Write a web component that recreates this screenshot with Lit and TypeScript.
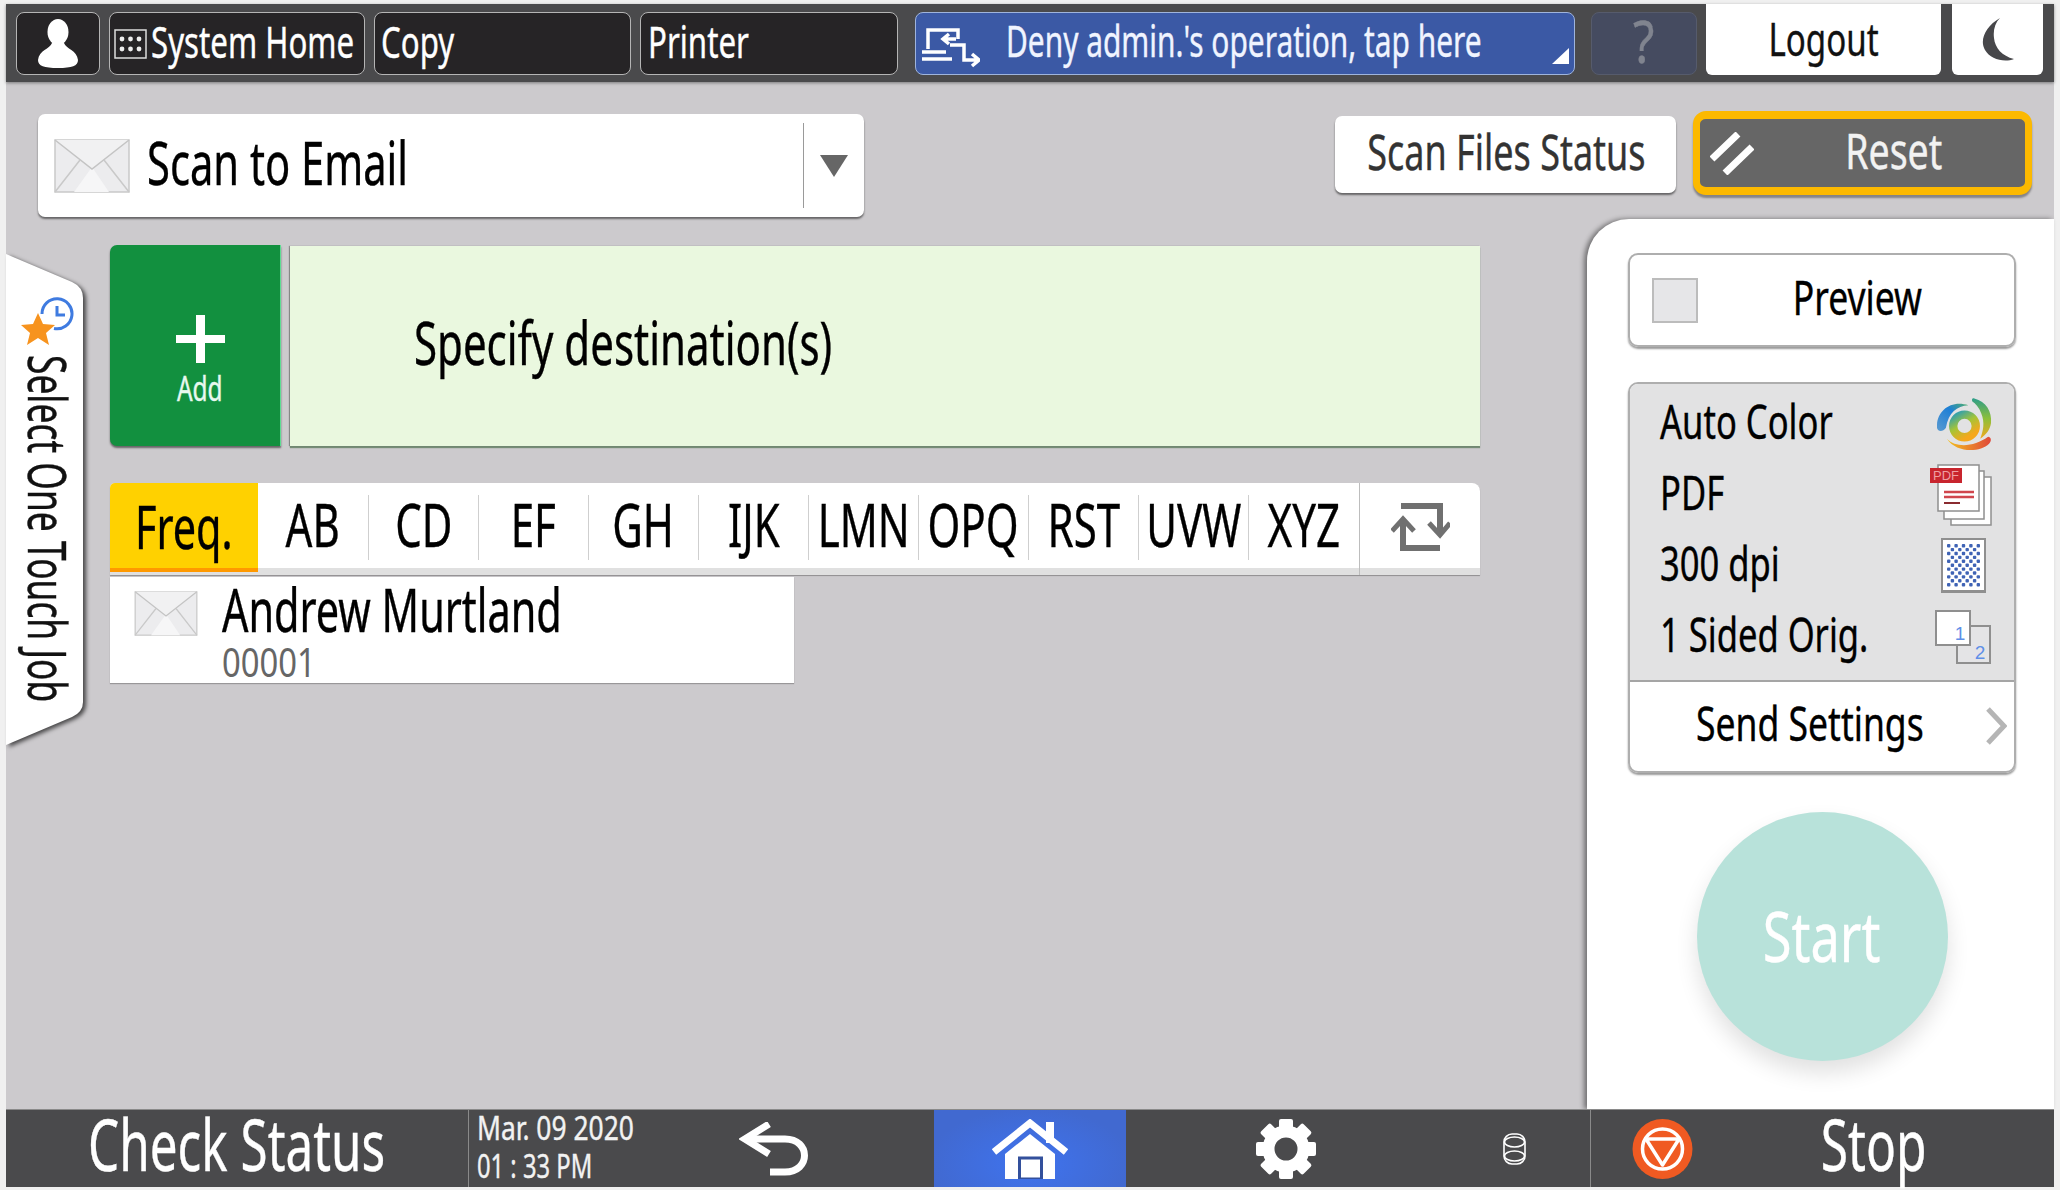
import { LitElement, html, css, svg } from "lit";
import { customElement } from "lit/decorators.js";

const envelope = (w: number, h: number) => html`<svg class="env" width=${w} height=${h} viewBox="0 0 76 54">
  <rect x="1" y="1" width="74" height="52" fill="#ececee" stroke="#c9c9c9" stroke-width="1.5"/>
  <path d="M20 53 L38 28 L55 53Z" fill="#f6f6f7"/>
  <path d="M1 1 L38 30 L75 1" fill="#f1f1f2" stroke="#c4c4c4" stroke-width="1.5"/>
  <path d="M1 53 L26 21 M75 53 L50 21" fill="none" stroke="#c9c9c9" stroke-width="1.5"/>
</svg>`;

const dots = () => {
  const out = [];
  for (let r = 0; r < 11; r++) for (let c = 0; c < 9; c++) {
    if ((r + c) % 2 === 0) out.push(svg`<rect x=${6 + c * 3.7} y=${6 + r * 3.9} width="3.4" height="3.4" rx="1" fill="#3f63b5"/>`);
  }
  return out;
};

const gearTeeth = () => [0, 45, 90, 135, 180, 225, 270, 315].map(
  (a) => svg`<rect x="23" y="0" width="14" height="14" rx="2" fill="#fff" transform="rotate(${a} 30 30)"/>`
);

@customElement("app-root")
export class AppRoot extends LitElement {
  static styles = css`
    :host { display: block; width: 2060px; height: 1190px; background: #f0f0f0; box-sizing: border-box; padding: 4px 6px 3px; font-family: "Noto Sans", "Liberation Sans", sans-serif; }
    * { box-sizing: border-box; }
    svg { display: block; flex: none; }
    .t { display: inline-block; white-space: nowrap; line-height: 1; transform: translateY(-.06em) scaleX(var(--sx, .72)); flex: none; -webkit-text-stroke: .4px currentColor; }
    .l { transform-origin: left center; }
    .screen { width: 2048px; height: 1183px; background: #cccacd; display: flex; flex-direction: column; }

    .top { height: 78px; flex: none; background: #4a4a4c; display: flex; align-items: flex-start; gap: 9px; padding: 8px 0 0 10px; box-shadow: 0 1px 3px rgba(0,0,0,.4); position: relative; }
    .tb { height: 63px; background: #262426; border: 1.5px solid #b5b5b5; border-radius: 8px; color: #fff; font-size: 44px; display: flex; align-items: center; --sx: .71; }
    .tb.user { width: 84px; justify-content: center; }
    .tb.sys { width: 256px; padding-left: 4px; gap: 4px; }
    .tb.copy { width: 257px; padding-left: 6px; }
    .tb.printer { width: 258px; padding-left: 7px; }
    .tb.deny { width: 660px; margin-left: 8px; background: #3b59a5; border-color: #9fb4dc; padding-left: 6px; position: relative; font-size: 43px; --sx: .695; }
    .tb.deny svg:first-child { margin-top: 8px; }
    .tb.deny .t { margin-left: 26px; color: #f0f4ff; }
    .tri { position: absolute; right: 5px; bottom: 10px; }
    .tb.help { width: 106px; margin-left: 7px; background: #454b60; border-color: #565b6c; color: #80848f; justify-content: center; font-size: 58px; --sx: .85; }
    .tb.white { background: #fff; border: none; border-radius: 0 0 6px 6px; margin-top: -8px; height: 71px; color: #111; justify-content: center; }
    .tb.logout { width: 235px; font-size: 46px; --sx: .72; padding-top: 3px; }
    .tb.moon { width: 91px; margin-left: 2px; }

    .head { height: 137px; flex: none; display: flex; align-items: flex-start; padding: 29px 22px 0 32px; }
    .select { width: 826px; height: 103px; margin-top: 3px; background: #fff; border-radius: 7px; box-shadow: 0 2px 2px rgba(0,0,0,.5); display: flex; align-items: center; padding: 0 16px; font-size: 60px; color: #000; --sx: .695; }
    .select .name { margin-left: 17px; flex: 1; }
    .vline { width: 1px; height: 85px; background: #9a9a9a; }
    .arrow { margin-left: 16px; }
    .files { width: 341px; height: 77px; margin-top: 5px; margin-left: auto; background: #fff; border-radius: 7px; box-shadow: 0 2px 2px rgba(0,0,0,.5); display: flex; align-items: center; justify-content: center; font-size: 50px; color: #333; padding: 0 0 2px 2px; }
    .reset { width: 339px; height: 84px; margin-left: 17px; background: #666; border: 7px solid #fcb900; border-width: 8px 7px; border-radius: 13px; box-shadow: 0 3px 2px rgba(0,0,0,.35); display: flex; align-items: center; padding-left: 10px; color: #f2f2f2; font-size: 50px; --sx: .75; }
    .reset .c { flex: 1; display: flex; justify-content: center; padding-left: 8px; }

    .body { height: 890px; flex: none; display: flex; }
    .tab { width: 77px; height: 491px; margin-top: 35px; flex: none; position: relative; display: flex; flex-direction: column; align-items: center; padding: 43px 0 0 6px; }
    .tabshape { position: absolute; left: 0; top: 0; filter: drop-shadow(3px 2px 2px rgba(0,0,0,.65)); }
    .tabicon { position: relative; }
    .vert { position: relative; writing-mode: vertical-rl; white-space: nowrap; line-height: 1; font-size: 52px; color: #111; transform: scaleY(.68); transform-origin: top center; margin-top: 8px; -webkit-text-stroke: .4px currentColor; }

    .content { width: 1371px; margin-left: 27px; padding-top: 26px; flex: none; }
    .dest { width: 1370px; height: 201px; display: flex; gap: 9px; }
    .add { width: 171px; background: #12903f; border-radius: 7px 0 0 7px; border-right: 1px solid #5fdc93; box-shadow: 0 2px 2px rgba(0,0,0,.5); display: flex; flex-direction: column; align-items: center; padding: 70px 0 0 10px; color: #e8f8ee; font-size: 34px; }
    .add .t { margin-top: 10px; }
    .field { flex: 1; background: #eaf8df; margin-top: 1px; box-shadow: 0 2px 1px rgba(60,100,60,.6), -1px 0 1px rgba(0,0,0,.3); display: flex; align-items: center; padding-left: 124px; font-size: 60px; color: #000; --sx: .70; }
    .tabs { width: 1370px; height: 92px; margin-top: 37px; background: #fff; border-radius: 5px 8px 0 0; box-shadow: inset 0 -7px 0 #e0e0e0, 0 1px 1px rgba(0,0,0,.3); display: flex; align-items: flex-start; font-size: 60px; color: #000; --sx: .70; }
    .tabs .cell { height: 85px; display: flex; align-items: center; justify-content: center; flex: none; width: 109px; padding-top: 4px; }
    .tabs .freq { width: 148px; height: 89px; background: #ffd100; border-bottom: 4px solid #ff9900; border-radius: 5px 0 0 0; padding-top: 8px; --sx: .69; }
    .tabs .ab { width: 110px; }
    .tabs .cell.plain { width: 110px; }
    .sep { width: 1px; height: 65px; margin-top: 12px; background: #cfcfcf; flex: none; }
    .tabs .swap { flex: 1; height: 92px; border-left: 1px solid #bdbdbd; display: flex; justify-content: center; padding-top: 20px; }
    .row { width: 684px; height: 106px; margin-top: 2px; background: #fff; box-shadow: 0 1px 1px rgba(0,0,0,.25); display: flex; padding-left: 24px; }
    .row .env { margin-top: 14px; }
    .row .col { margin-left: 24px; padding-top: 6px; display: flex; flex-direction: column; align-items: flex-start; }
    .row .nm { font-size: 60px; color: #000; --sx: .69; }
    .row .id { font-size: 40px; color: #666; margin-top: 1px; --sx: .82; -webkit-text-stroke: 0; }

    .panel { width: 467px; margin-left: auto; flex: none; background: #fff; border-radius: 42px 0 0 0; box-shadow: -3px 0 5px rgba(0,0,0,.45); display: flex; flex-direction: column; align-items: center; padding: 34px 38px 0 41px; }
    .preview { width: 388px; height: 94px; flex: none; border: 2px solid #aeaeae; border-radius: 10px; box-shadow: 0 2px 2px rgba(0,0,0,.4); display: flex; align-items: center; padding-left: 22px; font-size: 48px; color: #000; --sx: .74; }
    .box { width: 46px; height: 45px; background: #e6e6e8; border: 2px solid #bcbcbc; flex: none; }
    .preview .c { flex: 1; display: flex; justify-content: center; padding-left: 2px; }
    .card { width: 388px; height: 391px; flex: none; margin-top: 35px; border: 2px solid #aeaeae; border-radius: 10px; box-shadow: 0 2px 2px rgba(0,0,0,.4); font-size: 48px; color: #000; }
    .grey { height: 296px; background: #e2e2e3; border-radius: 8px 8px 0 0; padding: 4px 18px 0 30px; }
    .sr { height: 71px; display: flex; align-items: center; }
    .sr .t { flex: 1 1 0; min-width: 0; }
    .ic { width: 66px; display: flex; justify-content: center; flex: none; }
    .ic.shift { padding-right: 4px; }
    .ic.swirl { padding-left: 3px; }
    .send { height: 91px; border-top: 2px solid #a5a5a5; display: flex; align-items: center; padding: 0 7px 2px 5px; --sx: .74; }
    .send .c { flex: 1; display: flex; justify-content: center; }
    .start { width: 251px; height: 249px; flex: none; margin-top: 39px; border-radius: 50%; background: #b8e2da; box-shadow: 0 12px 22px rgba(0,0,0,.12); display: flex; align-items: center; justify-content: center; font-size: 70px; color: #fff; --sx: .75; padding-top: 4px; }

    .bottom { height: 78px; flex: none; background: #4a4a4c; display: flex; align-items: center; color: #fff; border-top: 1px solid #8a8a8a; }
    .check { width: 463px; height: 100%; border-right: 1px solid #8a8a8a; display: flex; align-items: center; justify-content: center; font-size: 72px; flex: none; --sx: .686; padding-bottom: 3px; }
    .date { width: 270px; padding-left: 8px; font-size: 33px; display: flex; flex-direction: column; align-items: flex-start; gap: 5px; flex: none; color: #f2f2f2; }
    .date .wide { --sx: .8; }
    .home { width: 192px; height: 100%; margin-left: 125px; flex: none; background: radial-gradient(ellipse at 50% 70%, #3f73ee 0%, #4169d0 75%); display: flex; align-items: center; justify-content: center; }
    .gear { margin-left: 130px; }
    .db { margin-left: 187px; }
    .divr { width: 1px; height: 100%; background: #8a8a8a; margin-left: 64px; flex: none; }
    .stop { margin-left: 41px; }
    .stoptxt { flex: 1; display: flex; justify-content: center; font-size: 72px; --sx: .69; padding-bottom: 3px; }
  `;

  render() {
    const letters = ["CD", "EF", "GH", "IJK", "LMN", "OPQ", "RST", "UVW"];
    return html`<div class="screen">
      <div class="top">
        <div class="tb user">
          <svg width="40" height="50" viewBox="0 0 40 50"><ellipse cx="20" cy="13" rx="10.5" ry="13" fill="#fff"/><path d="M14 24 C12 30 1 31 0 41 C0 47 6 49 20 49 C34 49 40 47 40 41 C39 31 28 30 26 24Z" fill="#fff"/></svg>
        </div>
        <div class="tb sys">
          <svg width="33" height="30" viewBox="0 0 33 30"><rect x="1" y="1" width="31" height="28" fill="none" stroke="#ddd" stroke-width="1.5"/>
            ${[8, 16.5, 25].map((x) => [10, 20].map((y) => svg`<circle cx=${x} cy=${y} r="2.4" fill="#eee"/>`))}</svg>
          <span class="t l">System Home</span>
        </div>
        <div class="tb copy"><span class="t l">Copy</span></div>
        <div class="tb printer"><span class="t l">Printer</span></div>
        <div class="tb deny">
          <svg width="58" height="42" viewBox="0 0 58 42" fill="none" stroke="#fff" stroke-width="3.5"><path d="M6 22 V3 H36 V12"/><path d="M0 25 H24 M0 32 H30"/><path d="M34 12 H22 M27 7 L21 12 L27 17"/><path d="M28 18 H42 V33 H56 M50 27 L57 33 L50 39"/></svg>
          <span class="t l">Deny admin.'s operation, tap here</span>
          <svg class="tri" width="17" height="16" viewBox="0 0 17 16"><path d="M17 0 V16 H0Z" fill="#fff"/></svg>
        </div>
        <div class="tb help"><span class="t">?</span></div>
        <div class="tb white logout"><span class="t">Logout</span></div>
        <div class="tb white moon">
          <svg width="32" height="43" viewBox="0 0 32 43"><path d="M18 0 C4 8 -3 22 3 32 C8 41 22 45 32 41 C20 38 13 30 12 20 C11 12 13 5 18 0Z" fill="#47474a"/></svg>
        </div>
      </div>

      <div class="head">
        <div class="select">
          ${envelope(76, 54)}
          <span class="t l name">Scan to Email</span>
          <div class="vline"></div>
          <svg class="arrow" width="28" height="22" viewBox="0 0 28 22"><path d="M0 0 H28 L14 22Z" fill="#666"/></svg>
        </div>
        <div class="files"><span class="t">Scan Files Status</span></div>
        <div class="reset">
          <svg width="44" height="43" viewBox="0 0 44 43" fill="none" stroke="#fff" stroke-width="7"><path d="M2 27 L28 2 M15 41 L42 15"/></svg>
          <div class="c"><span class="t">Reset</span></div>
        </div>
      </div>

      <div class="body">
        <div class="tab">
          <svg class="tabshape" width="80" height="495" viewBox="0 0 80 495"><path d="M0 0 L66 28 Q77 33 77 44 V448 Q77 458 66 463 L0 491Z" fill="#fff"/></svg>
          <svg class="tabicon" width="54" height="50" viewBox="0 0 54 50">
            <path d="M21 17 A15 15 0 1 1 33 31.5" fill="none" stroke="#3f7be0" stroke-width="3"/>
            <path d="M36 9 V18 H44" fill="none" stroke="#3f7be0" stroke-width="3"/>
            <path d="M17 16 L22 27 L34 28 L25 36 L28 48 L17 41 L6 48 L9 36 L0 28 L12 27Z" fill="#f7931e"/>
          </svg>
          <span class="vert">Select One Touch Job</span>
        </div>

        <div class="content">
          <div class="dest">
            <div class="add">
              <svg width="49" height="48" viewBox="0 0 49 48"><path d="M20 0 H29 V20 H49 V28 H29 V48 H20 V28 H0 V20 H20Z" fill="#fff"/></svg>
              <span class="t">Add</span>
            </div>
            <div class="field"><span class="t l">Specify destination(s)</span></div>
          </div>
          <div class="tabs">
            <div class="cell freq"><span class="t">Freq.</span></div>
            <div class="cell ab"><span class="t">AB</span></div>
            <div class="sep"></div>
            ${letters.map((x) => html`<div class="cell"><span class="t">${x}</span></div><div class="sep"></div>`)}
            <div class="cell plain"><span class="t">XYZ</span></div>
            <div class="swap">
              <svg width="59" height="48" viewBox="0 0 59 48" fill="none" stroke="#707070" stroke-width="6"><path d="M10 3 H49 V30"/><path d="M38 20 L49 32 L59 20" stroke-width="5"/><path d="M12 16 V45 H49"/><path d="M1 28 L12 16 L23 28" stroke-width="5"/></svg>
            </div>
          </div>
          <div class="row">
            ${envelope(64, 45)}
            <div class="col">
              <span class="t l nm">Andrew Murtland</span>
              <span class="t l id">00001</span>
            </div>
          </div>
        </div>

        <div class="panel">
          <div class="preview">
            <div class="box"></div>
            <div class="c"><span class="t">Preview</span></div>
          </div>
          <div class="card">
            <div class="grey">
              <div class="sr"><span class="t l">Auto Color</span>
                <div class="ic swirl"><svg width="55" height="54" viewBox="0 0 56 54">
                  <defs>
                    <linearGradient id="rg" x1="0" y1="0" x2=".6" y2="1"><stop offset="0" stop-color="#2f9fb0"/><stop offset=".5" stop-color="#a5c437"/><stop offset="1" stop-color="#f5a81c"/></linearGradient>
                    <linearGradient id="bg" x1="0" y1="1" x2="1" y2="0"><stop offset="0" stop-color="#5a9ad0"/><stop offset=".6" stop-color="#1e7fd6"/><stop offset="1" stop-color="#52b06a"/></linearGradient>
                    <linearGradient id="gg" x1="0" y1="0" x2="0" y2="1"><stop offset="0" stop-color="#2d9d8a"/><stop offset=".5" stop-color="#8cbf3a"/><stop offset="1" stop-color="#f1a91f"/></linearGradient>
                    <linearGradient id="og" x1="0" y1="0" x2="1" y2="0"><stop offset="0" stop-color="#f4c21e"/><stop offset="1" stop-color="#e0483a"/></linearGradient>
                  </defs>
                  <circle cx="28" cy="29" r="11.5" fill="none" stroke="url(#rg)" stroke-width="8.5"/>
                  <path d="M0 31 C-1 14 14 2 32 8 C20 9 12 15 9 31 C6 35 1 35 0 31Z" fill="url(#bg)"/>
                  <path d="M38 1 C50 4 56 14 55 26 C54 33 50 38 44 42 C47 34 49 26 45 16 C43 10 39 6 36 4 C35 2 36 0 38 1Z" fill="url(#gg)"/>
                  <path d="M10 42 C20 52 38 50 52 40 C55 40 56 44 53 47 C44 56 20 57 10 42Z" fill="url(#og)"/>
                </svg></div>
              </div>
              <div class="sr"><span class="t l">PDF</span>
                <div class="ic shift"><svg width="62" height="62" viewBox="0 0 62 62">
                  <rect x="21" y="13" width="40" height="48" fill="#fff" stroke="#8f8f8f" stroke-width="1.5"/>
                  <rect x="14" y="7" width="40" height="48" fill="#fff" stroke="#8f8f8f" stroke-width="1.5"/>
                  <rect x="8" y="1" width="41" height="46" fill="#fff" stroke="#8f8f8f" stroke-width="1.5"/>
                  <rect x="0" y="4" width="32" height="15" fill="#c8252e"/>
                  <text x="16" y="16" text-anchor="middle" font-family="Liberation Sans, sans-serif" font-size="13" fill="#ee9ea2">PDF</text>
                  <path d="M14 28 H44 M14 33 H44" stroke="#d0464d" stroke-width="2.5"/><path d="M14 39 H30" stroke="#8a2b30" stroke-width="2"/>
                </svg></div>
              </div>
              <div class="sr"><span class="t l">300 dpi</span>
                <div class="ic"><svg width="45" height="56" viewBox="0 0 45 56">
                  <rect x="1" y="1" width="43" height="53" fill="#fff" stroke="#8f8f8f" stroke-width="2"/>
                  <rect x="1" y="52" width="43" height="3" fill="#8f8f8f"/>
                  ${dots()}
                </svg></div>
              </div>
              <div class="sr"><span class="t l">1 Sided Orig.</span>
                <div class="ic"><svg width="56" height="54" viewBox="0 0 56 54">
                  <rect x="22" y="16" width="33" height="37" fill="#e4e4e6" stroke="#8f8f8f" stroke-width="2"/>
                  <rect x="1" y="1" width="34" height="34" fill="#fff" stroke="#8f8f8f" stroke-width="2"/>
                  <text x="25" y="30" font-family="Liberation Sans, sans-serif" font-size="19" fill="#5f8fe8" text-anchor="middle">1</text>
                  <text x="45" y="49" font-family="Liberation Sans, sans-serif" font-size="19" fill="#5f8fe8" text-anchor="middle">2</text>
                </svg></div>
              </div>
            </div>
            <div class="send">
              <div class="c"><span class="t">Send Settings</span></div>
              <svg width="22" height="38" viewBox="0 0 22 38" fill="none" stroke="#b5b5b5" stroke-width="5"><path d="M3 2 L19 19 L3 36"/></svg>
            </div>
          </div>
          <div class="start"><span class="t">Start</span></div>
        </div>
      </div>

      <div class="bottom">
        <div class="check"><span class="t">Check Status</span></div>
        <div class="date"><span class="t l wide">Mar. 09 2020</span><span class="t l">01 : 33 PM</span></div>
        <svg width="70" height="54" viewBox="0 0 70 54" fill="none" stroke="#fff" stroke-width="7"><path d="M6 17 H46 C72 17 72 50 46 50 H31"/><path d="M30 2 L6 17 L30 32"/></svg>
        <div class="home">
          <svg width="76" height="60" viewBox="0 0 76 60">
            <path d="M54 3 H62 V24 H54Z" fill="#fff"/>
            <path d="M2 33 L38 4 L74 33" fill="none" stroke="#fff" stroke-width="7"/>
            <path d="M13 35 L38 15 L63 35 V60 H13Z" fill="#fff"/>
            <rect x="27.5" y="39" width="22" height="21" fill="#fff" stroke="#33509c" stroke-width="3"/>
          </svg>
        </div>
        <svg class="gear" width="60" height="60" viewBox="0 0 60 60">${gearTeeth()}<circle cx="30" cy="30" r="17.5" fill="none" stroke="#fff" stroke-width="12"/></svg>
        <svg class="db" width="23" height="32" viewBox="0 0 23 32" fill="none" stroke="#fff" stroke-width="1.6"><rect x="1" y="1" width="21" height="30" rx="8"/><ellipse cx="11.5" cy="9" rx="10" ry="5"/><ellipse cx="11.5" cy="23" rx="10" ry="5"/></svg>
        <div class="divr"></div>
        <svg class="stop" width="61" height="60" viewBox="0 0 61 60"><circle cx="30.5" cy="30" r="30" fill="#f05a22"/><circle cx="30.5" cy="30" r="20" fill="none" stroke="#fff" stroke-width="3.5"/><path d="M14 20 H47 L30.5 46Z" fill="none" stroke="#fff" stroke-width="3.5" stroke-linejoin="round"/></svg>
        <div class="stoptxt"><span class="t">Stop</span></div>
      </div>
    </div>`;
  }
}
